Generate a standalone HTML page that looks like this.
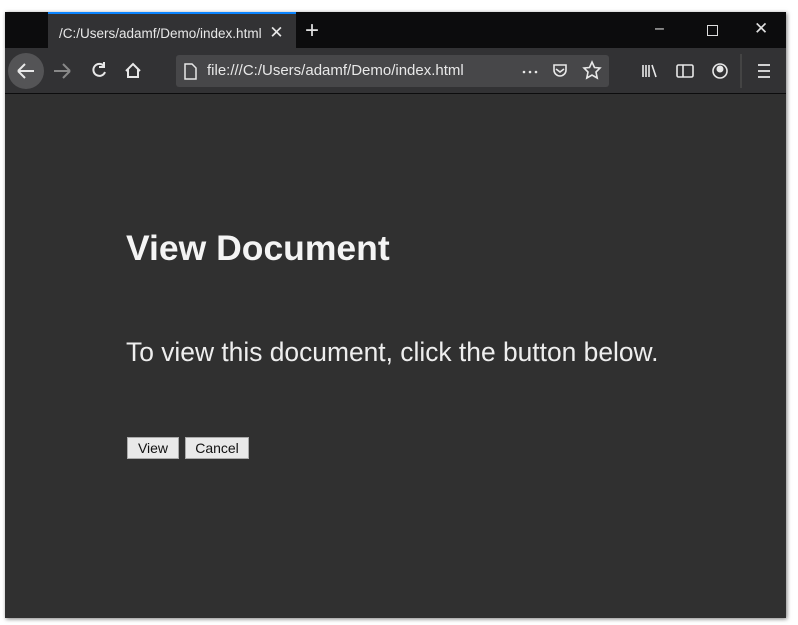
<!DOCTYPE html>
<html><head><style>
*{margin:0;padding:0;box-sizing:border-box}
body{width:798px;height:625px;background:#fff;position:relative;overflow:hidden;font-family:"Liberation Sans",sans-serif}
.win{position:absolute;left:5px;top:12px;width:781px;height:606px;background:#303030;box-shadow:1px 1px 4px rgba(0,0,0,.5)}
.tabs{position:absolute;left:0;top:0;width:781px;height:36px;background:#0c0c0d}
.tab{position:absolute;left:43px;top:0;width:248px;height:36px;background:#323234;border-top:2px solid #0a84ff;color:#e8e8e8;font-size:13.5px;padding:9px 0 0 11px}
.tb{position:absolute;left:0;top:36px;width:781px;height:46px;background:#323234;border-bottom:1px solid #0c0c0d}
.url{position:absolute;left:171px;top:7px;width:433px;height:32px;background:#474749;border-radius:3px;color:#e8e8e8;font-size:15px;padding:7px 0 0 31px}
.ic{position:absolute;color:#e0e0e0}
h1{position:absolute;left:121px;top:216px;color:#f4f4f4;font-size:35.5px;font-weight:bold}
p{position:absolute;left:121px;top:325px;color:#eee;font-size:26.4px}
.btn{position:absolute;top:425px;height:22px;background:#e9e9e9;border:1px solid #aaa;color:#111;font-size:14px;text-align:center;line-height:20px}
</style></head><body>
<div class="win">
<div class="tabs">
<div class="tab">/C:/Users/adamf/Demo/index.html <span style="margin-left:4px;font-size:17px">✕</span></div>
<div class="ic" style="left:300px;top:5px;font-size:24px">+</div>
<div class="ic" style="left:650px;top:8px;font-size:16px">–</div>
<div style="position:absolute;left:702px;top:13px;width:11px;height:11px;border:1px solid #ddd"></div>
<div class="ic" style="left:749px;top:7px;font-size:17px">✕</div>
</div>
<div class="tb">
<div style="position:absolute;left:3px;top:5px;width:36px;height:36px;border-radius:50%;background:#545456"></div>
<div class="url">file:///C:/Users/adamf/Demo/index.html</div>
<svg style="position:absolute;left:0;top:0" width="781" height="46" fill="none" stroke="#e8e8e8" stroke-width="2">
<path d="M13 23h16M13 23l7-7M13 23l7 7"/>
<path d="M49 23h16M65 23l-7-7M65 23l-7 7" stroke="#888"/>
<path d="M99 18a6 6 0 1 0 1 6M99 14v5h-5"/>
<path d="M121 23l7-7 7 7M123 21v8h10v-8" />
<path d="M180 16h7l4 4v11h-11z" stroke-width="1.5"/>
<circle cx="519" cy="24" r="1.3" fill="#e8e8e8" stroke="none"/><circle cx="525" cy="24" r="1.3" fill="#e8e8e8" stroke="none"/><circle cx="531" cy="24" r="1.3" fill="#e8e8e8" stroke="none"/>
<path d="M549 17h12v5a6 6 0 0 1-12 0z M551 21l4 3 4-3" stroke-width="1.6"/>
<path d="M587 14l2.5 5.5 5.5.5-4 4 1.2 6-5.2-3-5.2 3 1.2-6-4-4 5.5-.5z" stroke-width="1.6"/>
<path d="M638 17v12M641 17v12M644 17v12M647 17l4 12" stroke-width="1.6"/>
<rect x="672" y="17" width="16" height="12" rx="1.5" stroke-width="1.6"/><path d="M678 17v12" stroke-width="1.6"/>
<circle cx="715" cy="23" r="7" stroke-width="1.6"/><circle cx="715" cy="21" r="2.5" fill="#e8e8e8"/>
<path d="M736 6v34" stroke="#555" stroke-width="1"/>
<path d="M753 17h12M753 23h12M753 29h12" stroke-width="1.8"/>
</svg>
</div>
<h1>View Document</h1>
<p>To view this document, click the button below.</p>
<div class="btn" style="left:122px;width:52px">View</div>
<div class="btn" style="left:180px;width:64px">Cancel</div>
</div>
</body></html>
